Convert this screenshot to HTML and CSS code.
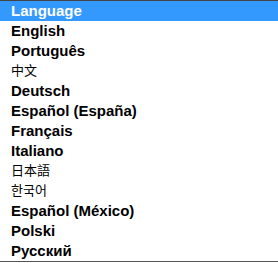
FILE: index.html
```html
<!DOCTYPE html>
<html lang="en">
<head>
  <meta charset="UTF-8" />
  <title>Language</title>
  <link rel="stylesheet" href="styles.css">
</head>
<body>

<ul class="lang-list">
  <li class="lang-head">Language</li>
  <li>English</li>
  <li>Português</li>
  <li class="cjk">中文</li>
  <li>Deutsch</li>
  <li>Español (España)</li>
  <li>Français</li>
  <li>Italiano</li>
  <li class="cjk">日本語</li>
  <li class="cjk">한국어</li>
  <li>Español (México)</li>
  <li>Polski</li>
  <li>Русский</li>
</ul>

</body>
</html>
```
FILE: styles.css
```css
body {
  font-family: "Liberation Sans", Arial, sans-serif;
  margin: 0;
  background: #fff;
}
.lang-list {
  list-style: none;
  margin: 0;
  padding: 0;
  border-top: 1px solid #444;
  border-bottom: 1px solid #555;
}
.lang-list li {
  height: 20px;
  line-height: 20px;
  padding-left: 11px;
  font-size: 15px;
  font-weight: bold;
  color: #000;
}
.lang-list .lang-head {
  background: #3399ff;
  color: #fff;
}
.lang-list .cjk {
  font-family: "Liberation Sans", "Noto Sans CJK SC", sans-serif;
  font-size: 13px;
  font-weight: normal;
}
```
